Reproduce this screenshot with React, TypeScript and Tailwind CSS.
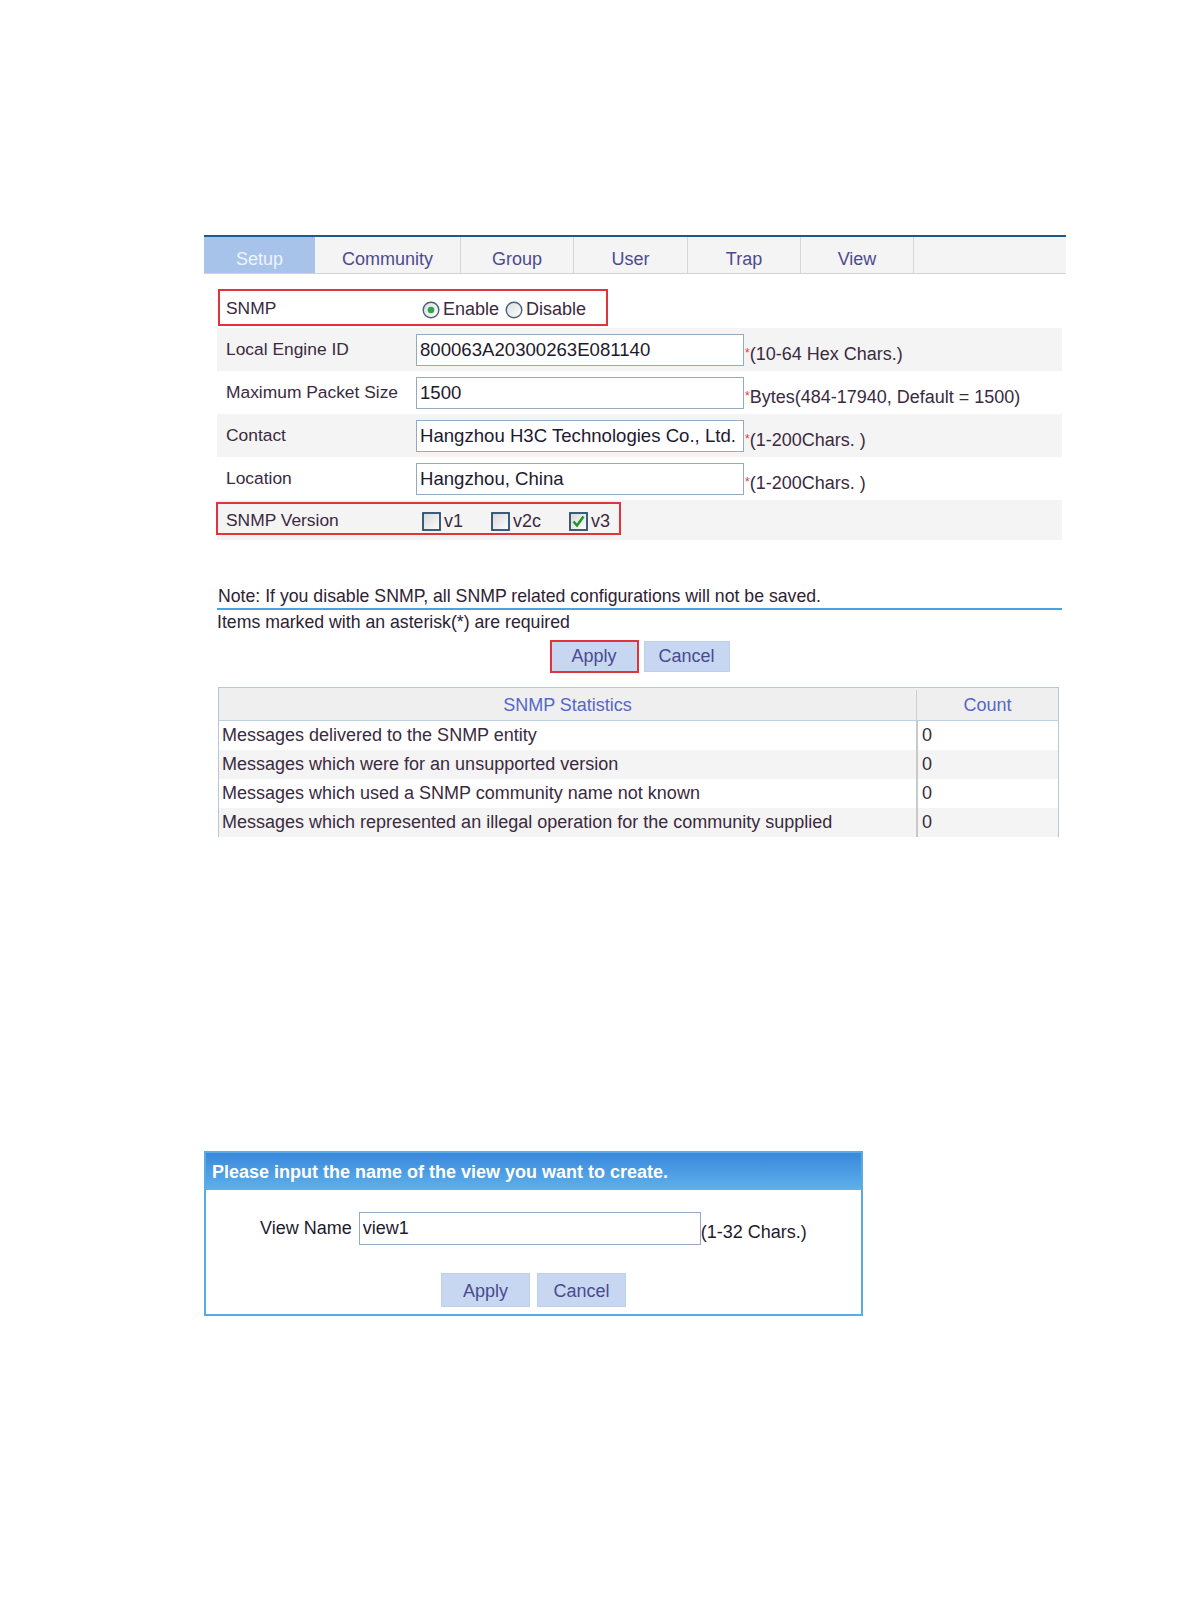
import React from 'react';

const tabs = [
  { name: 'Setup', w: 'w-[111px]', active: true },
  { name: 'Community', w: 'w-[146px]' },
  { name: 'Group', w: 'w-[113px]' },
  { name: 'User', w: 'w-[114px]' },
  { name: 'Trap', w: 'w-[113px]' },
  { name: 'View', w: 'w-[113px]' },
];

const stats = [
  'Messages delivered to the SNMP entity',
  'Messages which were for an unsupported version',
  'Messages which used a SNMP community name not known',
  'Messages which represented an illegal operation for the community supplied',
];

function Radio({ checked }: { checked?: boolean }) {
  return (
    <svg width="18" height="18" viewBox="0 0 18 18" className="shrink-0">
      <defs>
        <linearGradient id="rg" x1="0" y1="0" x2="1" y2="1">
          <stop offset="0" stopColor="#d9dde2" />
          <stop offset="1" stopColor="#ffffff" />
        </linearGradient>
      </defs>
      <circle cx="9" cy="9" r="7.8" fill="url(#rg)" stroke="#4e6073" strokeWidth="1.4" />
      {checked && <circle cx="9" cy="9" r="3.3" fill="#2fa64a" />}
    </svg>
  );
}

function Checkbox({ checked }: { checked?: boolean }) {
  return (
    <svg width="19" height="19" viewBox="0 0 19 19" className="shrink-0">
      <defs>
        <linearGradient id="cg" x1="0" y1="0" x2="1" y2="1">
          <stop offset="0" stopColor="#d6d6d6" />
          <stop offset="1" stopColor="#ffffff" />
        </linearGradient>
      </defs>
      <rect x="1" y="1" width="17" height="17" fill="url(#cg)" stroke="#264d6e" strokeWidth="1.8" />
      {checked && <path d="M4.5 9.5 L8 13.5 L14.5 4.5" fill="none" stroke="#1f9a2a" strokeWidth="2.6" />}
    </svg>
  );
}

function Hint({ text }: { text: string }) {
  return (
    <span className="ml-[1px] mt-[9px] whitespace-nowrap text-[18px] text-[#3b2a40]">
      <span className="relative -top-[3px] text-[12px] text-[#e8333f]">*</span>
      {text}
    </span>
  );
}

function Field({ label, value, hint, shaded }: { label: string; value: string; hint: string; shaded?: boolean }) {
  return (
    <div className={`flex h-[43px] items-center ${shaded ? 'bg-[#f4f4f4]' : ''}`}>
      <div className="w-[199px] shrink-0 pl-[9px] text-[17.4px] text-[#3b2a40]">{label}</div>
      <input
        readOnly
        value={value}
        className="h-[32px] w-[328px] shrink-0 border-[1.5px] border-[#93aac4] bg-white px-[3px] text-[18.6px] text-[#1e1a2e] outline-none"
      />
      <Hint text={hint} />
    </div>
  );
}

export default function App() {
  return (
    <div className="min-h-[1616px] bg-white pl-[204px] pt-[235px] font-['Liberation_Sans',Arial,sans-serif]">
      <div className="w-[862px]">
        {/* Tabs */}
        <div className="flex h-[39px] border-t-2 border-b border-t-[#1d5a8a] border-b-[#d2d2d2] bg-[#f4f4f4]">
          {tabs.map((t) => (
            <div
              key={t.name}
              className={`flex ${t.w} items-center justify-center pt-[8px] text-[18px] ${
                t.active ? 'bg-[#a8c3ea] text-[#eef4fc]' : 'border-r border-[#d6d6d6] text-[#4b4b8f]'
              }`}
            >
              {t.name}
            </div>
          ))}
        </div>

        {/* Form */}
        <div className="ml-[13px] mt-[14px] w-[845px]">
          <div className="relative flex h-[40px] items-center">
            <div className="w-[199px] shrink-0 pl-[9px] text-[17.4px] text-[#3b2a40]">SNMP</div>
            <div className="ml-[6px] mt-[3px] flex items-center text-[18px] text-[#3b2a40]">
              <Radio checked />
              <span className="ml-[3px]">Enable</span>
              <span className="ml-[6px]">
                <Radio />
              </span>
              <span className="ml-[3px]">Disable</span>
            </div>
            <div className="absolute left-[1px] top-[1px] h-[37px] w-[390px] border-2 border-[#e0343c]" />
          </div>
          <Field label="Local Engine ID" value="800063A20300263E081140" hint="(10-64 Hex Chars.)" shaded />
          <Field label="Maximum Packet Size" value="1500" hint="Bytes(484-17940, Default = 1500)" />
          <Field label="Contact" value="Hangzhou H3C Technologies Co., Ltd." hint="(1-200Chars. )" shaded />
          <Field label="Location" value="Hangzhou, China" hint="(1-200Chars. )" />
          <div className="relative flex h-[40px] items-center bg-[#f4f4f4]">
            <div className="w-[199px] shrink-0 pl-[9px] text-[17.4px] text-[#3b2a40]">SNMP Version</div>
            <div className="ml-[6px] mt-[2px] flex items-center text-[18px] text-[#3b2a40]">
              <Checkbox />
              <span className="ml-[3px]">v1</span>
              <span className="ml-[28px]">
                <Checkbox />
              </span>
              <span className="ml-[3px]">v2c</span>
              <span className="ml-[28px]">
                <Checkbox checked />
              </span>
              <span className="ml-[3px]">v3</span>
            </div>
            <div className="absolute -left-[1px] top-[2px] h-[33px] w-[405px] border-2 border-[#e0343c]" />
          </div>

          {/* Notes */}
          <div className="mt-[44px] h-[26px] border-b-2 border-[#4aa3e0] pl-[1px] text-[17.7px] leading-[24px] text-[#2e2233]">
            Note: If you disable SNMP, all SNMP related configurations will not be saved.
          </div>
          <div className="h-[25px] text-[17.7px] leading-[25px] text-[#2e2233]">Items marked with an asterisk(*) are required</div>
          <div className="mt-[5px] flex justify-center gap-[5px]">
            <button className="h-[33px] w-[89px] border-2 border-[#e0343c] bg-[#c7d7f1] text-[18px] text-[#4a4a90]">Apply</button>
            <button className="mt-[1px] h-[31px] w-[86px] border border-[#bcd0ec] bg-[#c7d7f1] text-[18px] text-[#4a4a90]">Cancel</button>
          </div>

          {/* Statistics */}
          <div className="ml-[1px] mt-[14px] w-[841px] border-x-[1.5px] border-t-[1.5px] border-[#b5c7dd]">
            <div className="grid h-[33px] grid-cols-[697px_1fr] border-b-[1.5px] border-[#bcd0e6] bg-[#efefef] pt-[2px] text-[18px] text-[#5567c8]">
              <div className="flex items-center justify-center">SNMP Statistics</div>
              <div className="flex items-center justify-center border-l border-[#cfcfcf]">Count</div>
            </div>
            {stats.map((s, i) => (
              <div
                key={s}
                className={`grid h-[29px] grid-cols-[697px_1fr] text-[18px] text-[#3b2a40] ${i % 2 ? 'bg-[#f4f4f4]' : 'bg-white'}`}
              >
                <div className="flex items-center pl-[3px]">{s}</div>
                <div className="flex items-center border-l-2 border-[#c9c9c9] pl-[4px]">0</div>
              </div>
            ))}
          </div>
        </div>

        {/* Create view dialog */}
        <div className="mt-[314px] h-[165px] w-[659px] border-2 border-[#57ace4] bg-white">
          <div className="h-[37px] bg-gradient-to-b from-[#3a87dc] to-[#5eb1ea] px-[6px] text-[18px] font-bold leading-[38px] text-white">
            Please input the name of the view you want to create.
          </div>
          <div className="mt-[22px] flex h-[33px] items-center pl-[54px]">
            <span className="text-[18px] text-[#1e1a2e]">View Name</span>
            <input
              readOnly
              value="view1"
              className="ml-[7px] h-[33px] w-[342px] border-[1.5px] border-[#93aac4] bg-white px-[3px] text-[18px] text-[#1e1a2e] outline-none"
            />
            <span className="mt-[7px] text-[18px] text-[#1e1a2e]">(1-32 Chars.)</span>
          </div>
          <div className="mt-[28px] flex justify-center gap-[7px]">
            <button className="h-[34px] w-[89px] border border-[#bcd0ec] bg-[#c7d7f1] pt-[2px] text-[18px] text-[#4a4a90]">Apply</button>
            <button className="h-[34px] w-[89px] border border-[#bcd0ec] bg-[#c7d7f1] pt-[2px] text-[18px] text-[#4a4a90]">Cancel</button>
          </div>
        </div>
      </div>
    </div>
  );
}
